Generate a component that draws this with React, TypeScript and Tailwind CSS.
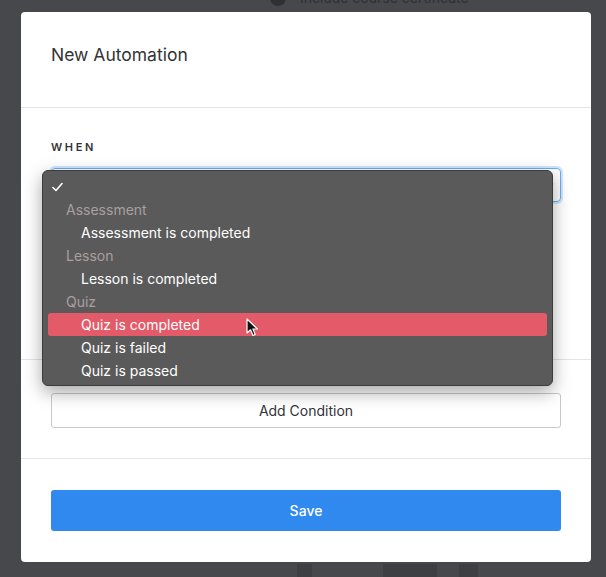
import React from "react";

const groups = [
  { label: "Assessment", items: ["Assessment is completed"] },
  { label: "Lesson", items: ["Lesson is completed"] },
  { label: "Quiz", items: ["Quiz is completed", "Quiz is failed", "Quiz is passed"] },
];

const Cursor: React.FC = () => (
  <svg width="14" height="20" viewBox="0 0 14 20" className="absolute left-[246px] top-[318px]">
    <path
      d="M1 1 L1 15 L4.5 11.8 L7 17.5 L9.3 16.5 L6.9 11 L11.5 11 Z"
      fill="#111"
      stroke="#fff"
      strokeWidth="1.2"
      strokeLinejoin="round"
    />
  </svg>
);

const Dropdown: React.FC = () => (
  <div className="absolute left-[42px] top-[170px] w-[511px] rounded-[6px] bg-[#5a5a5a] border border-[#3c3c3c] pt-[4px] pb-[3px] shadow-[0_6px_18px_rgba(0,0,0,0.35)] font-['Inter',sans-serif] text-[14px] leading-[23px]">
    <div className="h-[23px] pl-[9px] flex items-center text-white">
      <svg width="11" height="10" viewBox="0 0 11 10">
        <path d="M1 5.5 L4 8.5 L10 1.5" fill="none" stroke="#fff" strokeWidth="1.6" strokeLinecap="round" strokeLinejoin="round" />
      </svg>
    </div>
    {groups.map((g) => (
      <div key={g.label}>
        <div className="h-[23px] pl-[23px] text-[#a99f9f]">{g.label}</div>
        {g.items.map((item) => (
          <div
            key={item}
            className={
              item === "Quiz is completed"
                ? "h-[23px] mx-[5px] pl-[33px] rounded-[3px] bg-[#e35a68] text-white"
                : "h-[23px] pl-[38px] text-white"
            }
          >
            {item}
          </div>
        ))}
      </div>
    ))}
  </div>
);

const App: React.FC = () => {
  return (
    <div className="relative w-[606px] h-[577px] overflow-hidden bg-[#46484c] font-['Inter',sans-serif]">
      <div className="absolute left-[270px] top-[-10px] flex items-center gap-[14px] text-[14px] leading-[16px] text-[#2f3034]">
        <span className="w-[16px] h-[16px] rounded-full bg-[#2f3034]" />
        <span>Include course certificate</span>
      </div>

      <div className="relative mt-[12px] ml-[21px] w-[570px] h-[550px] bg-white rounded-[4px] flex flex-col">
        <div className="h-[96px] pt-[32px] px-[30px] border-b border-[#e4e4e4]">
          <h2 className="text-[17.5px] leading-[22px] text-[#333438]">New Automation</h2>
        </div>

        <div className="h-[252px] px-[30px] pt-[32px] border-b border-[#e4e4e4]">
          <div className="text-[11px] leading-[14px] font-semibold tracking-[0.24em] text-[#333438]">WHEN</div>
          <div className="mt-[14px] h-[34px] rounded-[4px] border border-[#6aaef0] shadow-[0_0_0_2px_rgba(120,180,245,0.35)] flex items-center justify-end pr-[6px]">
            <svg width="8" height="6" viewBox="0 0 8 6">
              <path d="M1 1.5 L4 4.5 L7 1.5" fill="none" stroke="#333" strokeWidth="1.4" />
            </svg>
          </div>
        </div>

        <div className="h-[99px] px-[30px] pt-[33px] border-b border-[#e4e4e4]">
          <button className="w-full h-[35px] rounded-[3px] border border-[#c9c9c9] bg-white text-[14px] text-[#333438]">
            Add Condition
          </button>
        </div>

        <div className="px-[30px] pt-[31px]">
          <button className="w-full h-[41px] rounded-[3px] bg-[#2f89ee] text-[14px] font-medium text-white">
            Save
          </button>
        </div>
      </div>

      <div className="absolute left-[297px] top-[564px] flex">
        <span className="w-[15px] h-[14px] bg-[#3d3f43]" />
        <span className="ml-[71px] w-[54px] h-[14px] bg-[#3d3f43]" />
        <span className="ml-[22px] w-[19px] h-[14px] bg-[#3d3f43]" />
      </div>

      <Dropdown />
      <Cursor />
    </div>
  );
};

export default App;
